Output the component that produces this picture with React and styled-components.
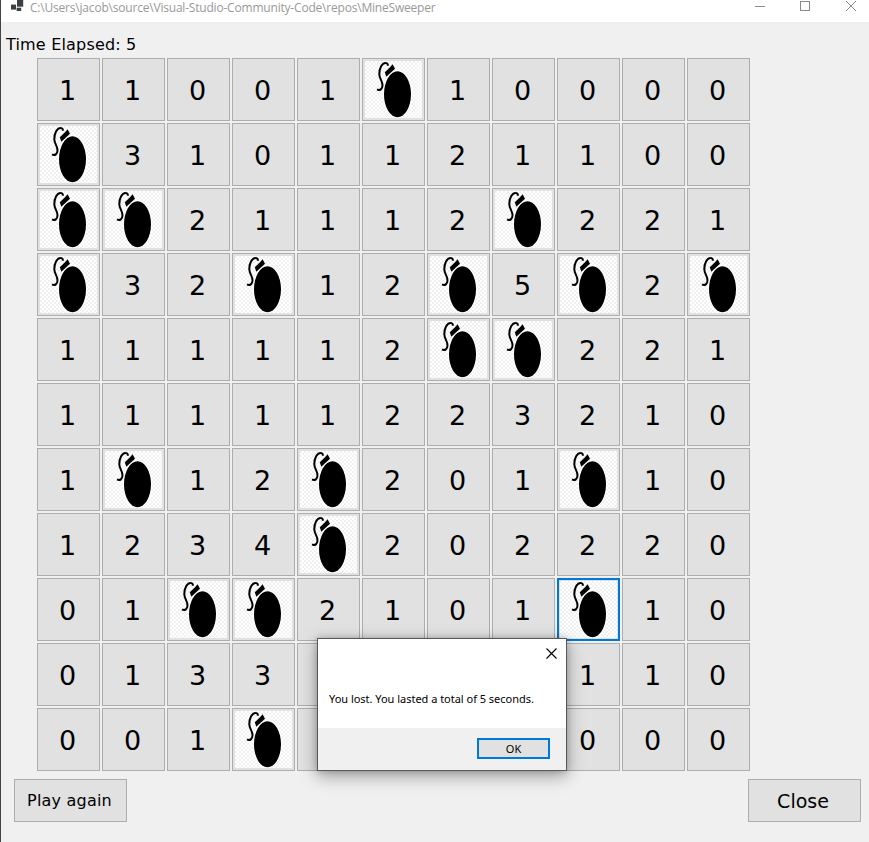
import React from 'react';
import styled, { createGlobalStyle, css } from 'styled-components';

const GlobalStyle = createGlobalStyle`
  * { box-sizing: border-box; }
  body { margin: 0; overflow: hidden; }
`;

const Window = styled.div`
  position: relative;
  display: flex;
  flex-direction: column;
  width: 869px;
  height: 842px;
  overflow: hidden;
  background: #f0f0f0;
  border-left: 1px solid #444346;
  color: #000;
  font-family: 'DejaVu Sans', Verdana, sans-serif;
`;

const TitleBar = styled.header`
  display: flex;
  justify-content: space-between;
  height: 22px;
  padding: 0 5px 0 10px;
  background: #fff;
  color: #999;
`;

const TitleGroup = styled.div`
  display: flex;
`;

const Title = styled.span`
  margin-left: 6px;
  font: 12px/15px 'Open Sans', 'Noto Sans', sans-serif;
  letter-spacing: -0.2px;
  white-space: pre;
`;

const Timer = styled.div`
  height: 36px;
  padding: 14px 0 0 5px;
  font-size: 16px;
  line-height: 18px;
  letter-spacing: 0.18px;
  white-space: pre;
`;

const Board = styled.main`
  display: grid;
  grid-template-columns: repeat(11, 63px);
  grid-auto-rows: 63px;
  gap: 2px;
  margin-left: 36px;
`;

const buttonFace = css`
  display: flex;
  align-items: center;
  justify-content: center;
  margin: 0;
  background: #e1e1e1;
  border: 1px solid #adadad;
  color: #000;
  font-family: inherit;
`;

const Cell = styled.button`
  ${buttonFace}
  padding: ${(p) => (p.$mine ? '0' : '1px 2px 0 0')};
  font-size: 27px;
  line-height: 31px;
  ${(p) => p.$focused && 'border: 2px solid #0078d7;'}
`;

const Actions = styled.footer`
  display: flex;
  justify-content: space-between;
  padding: 8px 8px 0 13px;
`;

const ActionButton = styled.button`
  ${buttonFace}
  width: 113px;
  height: 43px;
  padding: ${(p) => p.$pad};
  font-size: ${(p) => p.$size};
  letter-spacing: ${(p) => p.$tracking};
  white-space: nowrap;
`;

const Dialog = styled.section`
  position: absolute;
  left: 316px;
  top: 638px;
  display: flex;
  flex-direction: column;
  width: 250px;
  height: 133px;
  background: #fff;
  border: 1px solid #56585a;
  box-shadow: 0 5px 16px rgba(0, 0, 0, 0.36), 0 0 6px rgba(0, 0, 0, 0.18);
  font: 11px/15px 'Noto Sans', 'Open Sans', sans-serif;
`;

const DialogTop = styled.div`
  display: flex;
  justify-content: flex-end;
  height: 52px;
  padding: 9px 9px 0 0;
`;

const Message = styled.p`
  flex: 1;
  margin: 0;
  padding-left: 11px;
  letter-spacing: -0.02px;
  white-space: nowrap;
`;

const DialogFooter = styled.div`
  display: flex;
  justify-content: flex-end;
  height: 42px;
  padding: 10px 16px 0 0;
  background: #f0f0f0;
`;

const OkButton = styled.button`
  ${buttonFace}
  width: 73px;
  height: 21px;
  padding: 0 0 1px;
  border: 2px solid #0078d7;
  font-size: 11px;
  line-height: 15px;
`;

const AppIcon = () => (
  <svg width="13" height="12" viewBox="0 0 13 12" fill="#3f3f3f">
    <rect x="0" y="4.6" width="5" height="5" />
    <rect x="6" y="0" width="6.2" height="6.7" />
    <rect x="5.6" y="7.7" width="4.6" height="3.3" />
  </svg>
);

const CaptionIcons = () => (
  <svg width="109" height="14" viewBox="0 0 109 14" fill="none" stroke="#8a8a8a">
    <path d="M0 6.5h10M45.5 1.5h9v9h-9z" shapeRendering="crispEdges" />
    <path d="M91 1l10 10M101 1l-10 10" />
  </svg>
);

const CloseGlyph = () => (
  <svg width="11" height="11" viewBox="0 0 11 11" fill="none" stroke="#000" strokeWidth="1.1">
    <path d="M.5.5l10 10M10.5.5l-10 10" />
  </svg>
);

const Bomb = () => (
  <svg width="57" height="57" viewBox="0 0 57 57">
    <defs>
      <pattern id="check" width="4" height="4" patternUnits="userSpaceOnUse">
        <rect width="4" height="4" fill="#fff" />
        <path d="M0 0h2v2h2v2h-2v-2h-2z" fill="#f1f1f1" />
      </pattern>
    </defs>
    <rect width="57" height="57" fill="url(#check)" />
    <ellipse cx="32.5" cy="33.2" rx="14.7" ry="24" fill="#fff" />
    <ellipse cx="32.5" cy="33.2" rx="13.5" ry="23" />
    <path d="M19.8 11.3l5.2-5 2.6-3 2.4 4.5-8.7 7.9z" />
    <path d="M12 28.4c3 1.7 5.3-.6 5.5-3.7.3-4.5-3.1-6.7-3.2-11.4C14.2 7.3 17.2 1.8 20.5 1.9c1.6 0 2.5 1 2.4 2.8" fill="none" stroke="#000" strokeWidth="2" />
  </svg>
);

const rows = [
  '11001*10000',
  '*3101121100',
  '**21112*221',
  '*32*12*5*2*',
  '111112**221',
  '11111223210',
  '1*12*201*10',
  '1234*202220',
  '01**2101*10',
  '0133    110',
  '001*    000',
];

const isFocused = (r, c) => r === 8 && c === 8;

export default function App() {
  return (
    <>
      <GlobalStyle />
      <Window>
        <TitleBar>
          <TitleGroup>
            <AppIcon />
            <Title>{'C:\\Users\\jacob\\source\\Visual-Studio-Community-Code\\repos\\MineSweeper'}</Title>
          </TitleGroup>
          <CaptionIcons />
        </TitleBar>
        <Timer>Time Elapsed: 5</Timer>
        <Board>
          {rows.flatMap((row, r) =>
            [...row].map((value, c) => (
              <Cell key={`${r}-${c}`} $mine={value === '*'} $focused={isFocused(r, c)}>
                {value === '*' ? <Bomb /> : value.trim()}
              </Cell>
            )),
          )}
        </Board>
        <Actions>
          <ActionButton $size="16px" $tracking="0.2px" $pad="0 2px 0 0">Play again</ActionButton>
          <ActionButton $size="19px" $tracking="0" $pad="0 3px 0 0">Close</ActionButton>
        </Actions>
        <Dialog role="dialog">
          <DialogTop>
            <CloseGlyph />
          </DialogTop>
          <Message>You lost. You lasted a total of 5 seconds.</Message>
          <DialogFooter>
            <OkButton>OK</OkButton>
          </DialogFooter>
        </Dialog>
      </Window>
    </>
  );
}
